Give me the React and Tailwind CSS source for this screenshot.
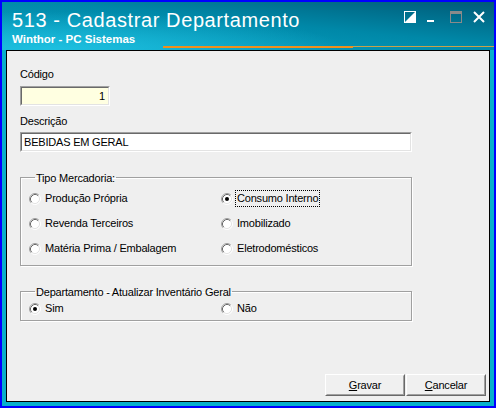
import React from "react";

function Radio({ checked }) {
  return (
    <svg width="12" height="12" viewBox="0 0 12 12" className="shrink-0">
      <circle cx="6" cy="6" r="5" fill="#ffffff" />
      <path d="M2.11 9.89 A5.5 5.5 0 0 1 9.89 2.11" fill="none" stroke="#a0a0a0" strokeWidth="1" />
      <path d="M9.89 2.11 A5.5 5.5 0 0 1 2.11 9.89" fill="none" stroke="#ffffff" strokeWidth="1" />
      <path d="M2.82 9.18 A4.5 4.5 0 0 1 9.18 2.82" fill="none" stroke="#696969" strokeWidth="1" />
      <path d="M9.18 2.82 A4.5 4.5 0 0 1 2.82 9.18" fill="none" stroke="#e3e3e3" strokeWidth="1" />
      {checked && <circle cx="6" cy="6" r="2" fill="#000000" />}
    </svg>
  );
}

function RadioItem({ label, checked, focus }) {
  return (
    <div className="flex items-center h-[17px]">
      <Radio checked={checked} />
      <span
        className={
          focus
            ? "ml-[3px] px-[1px] leading-[15px] outline outline-1 outline-dotted outline-black"
            : "ml-[4px] leading-[15px]"
        }
      >
        {label}
      </span>
    </div>
  );
}

function Sunken({ className, children }) {
  return (
    <div className={"border border-t-[#a0a0a0] border-l-[#a0a0a0] border-b-white border-r-white " + className}>
      <div className="h-full border border-t-[#696969] border-l-[#696969] border-b-[#e3e3e3] border-r-[#e3e3e3] flex items-center">
        {children}
      </div>
    </div>
  );
}

function Button({ children }) {
  return (
    <div className="w-[80px] h-[22px] border border-t-white border-l-white border-b-[#696969] border-r-[#696969]">
      <div className="h-full border border-t-[#f0f0f0] border-l-[#f0f0f0] border-b-[#a0a0a0] border-r-[#a0a0a0] flex items-center justify-center bg-[#f0f0f0]">
        {children}
      </div>
    </div>
  );
}

export default function App() {
  return (
    <div className="w-[496px] h-[408px] border-2 border-[#0000ff] bg-[#06b0cc] flex flex-col font-['Liberation_Sans',Arial,sans-serif] text-[11px] tracking-[-0.2px] text-black">
      {/* Title bar */}
      <div className="h-[48px] shrink-0 flex flex-col bg-[radial-gradient(ellipse_60%_80%_at_10%_100%,#1ec0e0_0%,rgba(30,192,224,0)_100%),linear-gradient(to_bottom_left,#005a76_0%,#0088a8_45%,#0aa6c8_100%)]">
        <div className="flex items-start justify-between">
          <div className="pl-[10px] pt-[6px] flex flex-col">
            <div className="text-white text-[20px] leading-[24px] tracking-[0.6px]">513 - Cadastrar Departamento</div>
            <div className="text-white text-[11.5px] font-bold leading-[14px] tracking-[0px]">Winthor - PC Sistemas</div>
          </div>
          <div className="flex items-start pt-[9px] pr-[9px] gap-[11px]">
            <svg width="12" height="12" viewBox="0 0 12 12">
              <rect x="0.5" y="0.5" width="11" height="11" fill="none" stroke="#ffffff" />
              <path d="M1 11 L11 1 L11 11 Z" fill="#ffffff" />
            </svg>
            <svg width="12" height="12" viewBox="0 0 12 12">
              <rect x="0" y="9" width="7" height="2" fill="#ffffff" />
            </svg>
            <svg width="12" height="12" viewBox="0 0 12 12">
              <rect x="0.5" y="0.5" width="11" height="11" fill="none" stroke="#8a8a8a" />
              <rect x="0" y="0" width="12" height="3" fill="#8a8a8a" />
            </svg>
            <svg width="12" height="12" viewBox="0 0 12 12">
              <path d="M1 1 L11 11 M11 1 L1 11" stroke="#ffffff" strokeWidth="2" />
            </svg>
          </div>
        </div>
        <div className="flex items-start pl-[161px] mt-auto mb-[2px]">
          <div className="w-[190px] h-[2px] bg-[#f0901c]" />
          <div className="flex-1 h-[1px] bg-[#c8a24a]" />
        </div>
      </div>

      {/* Content */}
      <div className="flex-1 px-[4px] pb-[4px] flex flex-col">
        <div className="flex-1 border border-black bg-[#efefef] flex flex-col pl-[13px] pt-[17px] pr-[3px] pb-[5px]">
          <div className="leading-[13px]">Código</div>
          <Sunken className="mt-[5px] w-[90px] h-[20px] bg-[#ffffe1]">
            <div className="flex-1 text-right pr-[3px] leading-[13px]">1</div>
          </Sunken>

          <div className="mt-[9px] leading-[13px]">Descrição</div>
          <Sunken className="mt-[4px] w-[392px] h-[20px] bg-white">
            <div className="flex-1 pl-[2px] leading-[13px]">BEBIDAS EM GERAL</div>
          </Sunken>

          <fieldset className="mt-[17px] w-[392px] border border-[#a0a0a0] shadow-[1px_1px_0_#ffffff,inset_1px_1px_0_#ffffff] pl-[8px] pt-[5px] pb-[8px]">
            <legend className="ml-[6px] px-[1px] pt-[3px] leading-[13px]">Tipo Mercadoria:</legend>
            <div className="grid grid-cols-[192px_1fr] gap-y-[8px]">
              <RadioItem label="Produção Própria" />
              <RadioItem label="Consumo Interno" checked focus />
              <RadioItem label="Revenda Terceiros" />
              <RadioItem label="Imobilizado" />
              <RadioItem label="Matéria Prima / Embalagem" />
              <RadioItem label="Eletrodomésticos" />
            </div>
          </fieldset>

          <fieldset className="mt-[17px] w-[392px] border border-[#a0a0a0] shadow-[1px_1px_0_#ffffff,inset_1px_1px_0_#ffffff] pl-[8px] pt-[1px] pb-[3px]">
            <legend className="ml-[6px] px-[1px] pt-[3px] leading-[13px]">Departamento - Atualizar Inventário Geral</legend>
            <div className="grid grid-cols-[192px_1fr]">
              <RadioItem label="Sim" checked />
              <RadioItem label="Não" />
            </div>
          </fieldset>

          <div className="mt-auto flex justify-end gap-[1px]">
            <Button>
              <span><span className="underline">G</span>ravar</span>
            </Button>
            <Button>
              <span><span className="underline">C</span>ancelar</span>
            </Button>
          </div>
        </div>
      </div>
    </div>
  );
}
